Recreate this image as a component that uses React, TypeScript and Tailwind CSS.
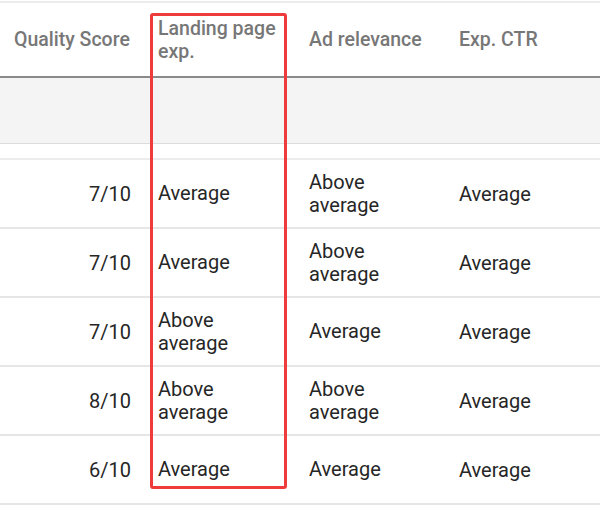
const rows = [
  { qs: "7/10", lp: ["Average"], ad: ["Above", "average"], ctr: "Average" },
  { qs: "7/10", lp: ["Average"], ad: ["Above", "average"], ctr: "Average" },
  { qs: "7/10", lp: ["Above", "average"], ad: ["Average"], ctr: "Average" },
  { qs: "8/10", lp: ["Above", "average"], ad: ["Above", "average"], ctr: "Average" },
  { qs: "6/10", lp: ["Average"], ad: ["Average"], ctr: "Average" },
];

const cols = "grid grid-cols-[145px_150px_150px_155px]";

function Lines({ lines }: { lines: string[] }) {
  return (
    <div className="leading-[23px]">
      {lines.map((l) => (
        <div key={l}>{l}</div>
      ))}
    </div>
  );
}

export default function App() {
  return (
    <div
      className="relative h-[520px] w-[600px] overflow-hidden bg-white text-[20px]"
      style={{ fontFamily: "Roboto, 'Noto Sans', sans-serif" }}
    >
      <div className="mt-[1px] h-[2px] bg-[#ececec]" />

      <div className={`${cols} h-[73px] items-center text-[19.5px] text-[#777777] font-medium`}>
        <div className="pl-[14px] pt-[1px]">Quality Score</div>
        <div className="pl-[13px] leading-[23px]">
          <div>Landing page</div>
          <div>exp.</div>
        </div>
        <div className="pl-[14px] pt-[1px]">Ad relevance</div>
        <div className="pl-[14px] pt-[1px]">Exp. CTR</div>
      </div>

      <div className="h-[2px] bg-[#8a8a8a]" />
      <div className="h-[66px] border-b border-[#dcdcdc] bg-[#f4f4f4]" />
      <div className="h-[14px]" />

      <div className="border-t-2 border-[#ececec]">
        {rows.map((r, i) => (
          <div
            key={i}
            className={`${cols} h-[69px] items-center border-b-2 border-[#e6e6e6] text-[#262626]`}
          >
            <div className="pr-[14px] text-right">{r.qs}</div>
            <div className="pl-[13px]">
              <Lines lines={r.lp} />
            </div>
            <div className="pl-[14px]">
              <Lines lines={r.ad} />
            </div>
            <div className="pl-[14px]">{r.ctr}</div>
          </div>
        ))}
      </div>

      <div className="pointer-events-none absolute left-[150px] top-[13px] h-[476px] w-[137px] rounded-[3px] border-[3px] border-[#ee3b3b]" />
    </div>
  );
}
